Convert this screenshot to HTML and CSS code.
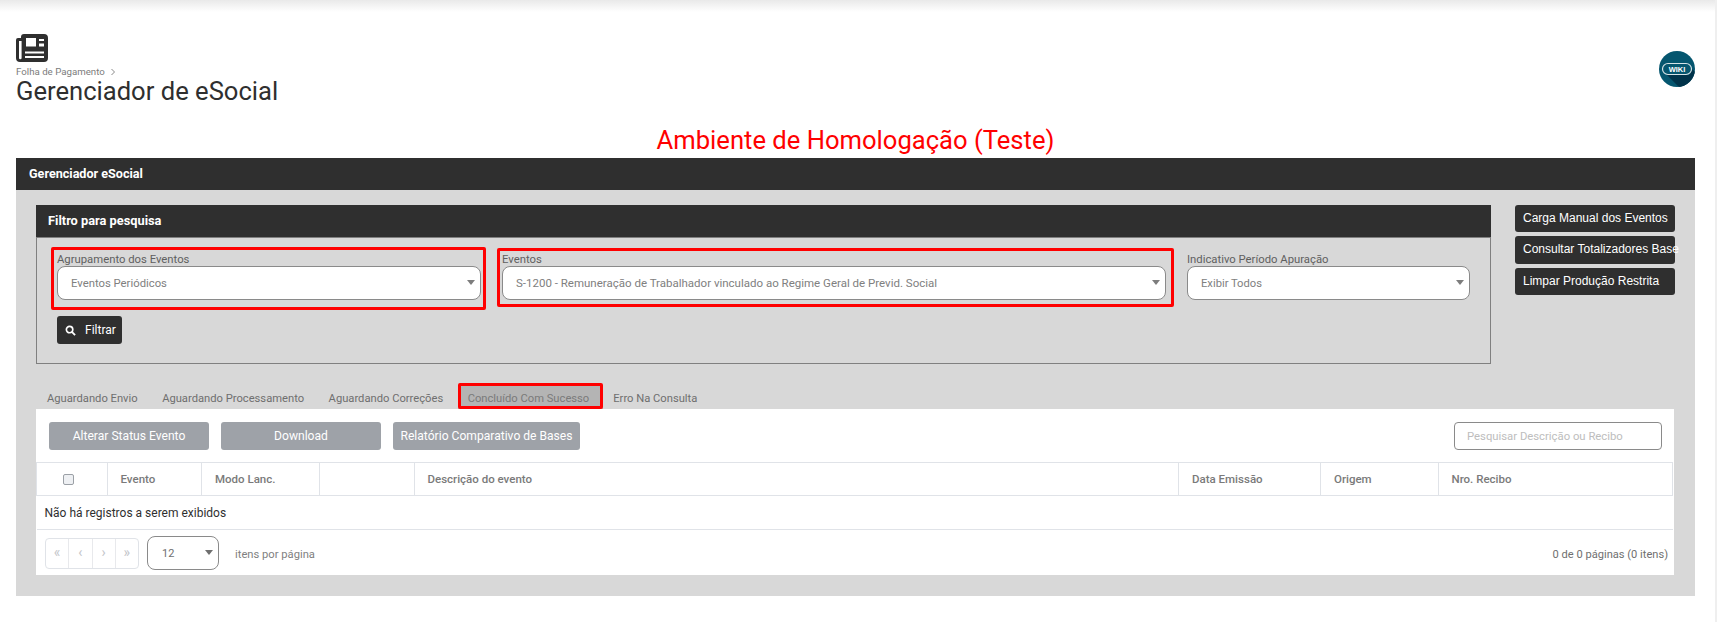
FILE: index.html
```html
<!DOCTYPE html>
<html lang="pt-BR">
<head>
<meta charset="utf-8">
<title>Gerenciador de eSocial</title>
<link rel="stylesheet" href="styles.css">
</head>
<body>
<div class="topbar"></div>
<main class="page">
  <header class="page-head">
    <div class="head-left">
      <svg class="news-icon" viewBox="0 0 32 28" aria-hidden="true">
        <path fill="#2f2f2f" fill-rule="evenodd" d="M8 0H28a4 4 0 0 1 4 4V24a4 4 0 0 1-4 4H4a4 4 0 0 1-4-4V6a2 2 0 0 1 2-2H5V3a3 3 0 0 1 3-3ZM3 7V24a1.300 1.300 0 0 0 2.600 0V7ZM10 4V12.500H20V4ZM23 5V7H28V5ZM23 9.500V12.500H28V9.500ZM9 17.500V19.500H28V17.500ZM9 22V24H28V22Z"/>
      </svg>
      <nav class="crumb">Folha de Pagamento
        <svg class="crumb-sep" viewBox="0 0 6 8" aria-hidden="true"><path d="M1.500 1L4.500 4L1.500 7" fill="none" stroke="#8a8a8a" stroke-width="1"/></svg>
      </nav>
      <h1>Gerenciador de eSocial</h1>
    </div>
    <svg class="wiki" viewBox="0 0 36 36" role="img" aria-label="Wiki">
      <defs><clipPath id="c"><circle cx="18" cy="18" r="18"/></clipPath></defs>
      <circle cx="18" cy="18" r="18" fill="#05566f"/>
      <path clip-path="url(#c)" fill="#00334a" d="M8 24L30 24L33 18L42 26L42 42L26 42Z"/>
      <rect x="3.500" y="12.500" width="29" height="11" rx="5.500" fill="#05566f" stroke="#d5e2e6" stroke-width="1.200"/>
      <text x="18" y="20.800" text-anchor="middle" class="wiki-text">WIKI</text>
    </svg>
  </header>
  <p class="env">Ambiente de Homologação (Teste)</p>

  <section class="card">
    <h2 class="card-title">Gerenciador eSocial</h2>
    <div class="card-body">
      <div class="top-row">
        <section class="filter">
          <h3 class="filter-title">Filtro para pesquisa</h3>
          <div class="filter-body">
            <div class="fields">
              <div class="field field-a">
                <label>Agrupamento dos Eventos</label>
                <div class="select-wrap"><select><option>Eventos Periódicos</option></select></div>
              </div>
              <div class="field field-b">
                <label>Eventos</label>
                <div class="select-wrap"><select><option>S-1200 - Remuneração de Trabalhador vinculado ao Regime Geral de Previd. Social</option></select></div>
              </div>
              <div class="field field-c">
                <label>Indicativo Período Apuração</label>
                <div class="select-wrap"><select><option>Exibir Todos</option></select></div>
              </div>
            </div>
            <button class="btn-dark btn-filter">
              <svg viewBox="0 0 12 12" aria-hidden="true"><circle cx="5" cy="5" r="3.500" fill="none" stroke="#fff" stroke-width="1.800"/><path d="M7.500 7.500L11 11" stroke="#fff" stroke-width="2"/></svg>
              Filtrar
            </button>
          </div>
        </section>
        <div class="side-actions">
          <button class="btn-dark btn-side">Carga Manual dos Eventos</button>
          <button class="btn-dark btn-side btn-tall">Consultar Totalizadores Base</button>
          <button class="btn-dark btn-side">Limpar Produção Restrita</button>
        </div>
      </div>

      <ul class="tabs">
        <li>Aguardando Envio</li>
        <li>Aguardando Processamento</li>
        <li>Aguardando Correções</li>
        <li class="tab-active">Concluído Com Sucesso</li>
        <li>Erro Na Consulta</li>
      </ul>

      <section class="grid-panel">
        <div class="toolbar">
          <button class="btn-gray">Alterar Status Evento</button>
          <button class="btn-gray">Download</button>
          <button class="btn-gray btn-wide">Relatório Comparativo de Bases</button>
          <input class="search" placeholder="Pesquisar Descrição ou Recibo">
        </div>
        <table>
          <colgroup>
            <col class="c1"><col class="c2"><col class="c3"><col class="c4"><col class="c5"><col class="c6"><col class="c7"><col class="c8">
          </colgroup>
          <thead>
            <tr>
              <th class="check"><span class="checkbox"></span></th>
              <th>Evento</th><th>Modo Lanc.</th><th></th><th>Descrição do evento</th><th>Data Emissão</th><th>Origem</th><th>Nro. Recibo</th>
            </tr>
          </thead>
          <tbody>
            <tr><td colspan="8">Não há registros a serem exibidos</td></tr>
          </tbody>
        </table>
        <div class="pager">
          <div class="pages">
            <span>«</span><span>‹</span><span>›</span><span>»</span>
          </div>
          <div class="select-wrap size-select"><select><option>12</option></select></div>
          <span class="per-page">itens por página</span>
          <span class="page-info">0 de 0 páginas (0 itens)</span>
        </div>
      </section>
    </div>
  </section>
</main>
</body>
</html>
```
FILE: styles.css
```css
* { box-sizing: border-box; }
html, body { margin: 0; padding: 0; }
body {
  height: 622px;
  overflow: hidden;
  background: #fff;
  font-family: Roboto, "Liberation Sans", sans-serif;
  color: #2f2f2f;
  border-right: 2px solid #efefef;
}
.topbar {
  height: 12px;
  background: linear-gradient(#e9e9e9, #fff);
}
.page { padding: 0 20px 0 16px; }
.page-head {
  display: flex;
  justify-content: space-between;
  align-items: flex-start;
  padding-top: 22px;
}
.news-icon { display: block; width: 32px; height: 28px; }
.crumb {
  display: flex;
  align-items: center;
  gap: 5px;
  margin-top: 3px;
  font-size: 9.700px;
  line-height: 13px;
  color: #7c7c7c;
}
.crumb-sep { width: 6px; height: 8px; }
h1 {
  margin: -1px 0 0;
  font-size: 25.600px;
  font-weight: 400;
  line-height: 28px;
  color: #2f2f2f;
}
.wiki { width: 36px; height: 36px; margin-top: 17px; }
.wiki-text { font: 700 7.500px "Liberation Sans", sans-serif; fill: #fff; }
.env {
  margin: 19px 0 0;
  text-align: center;
  font-size: 25.600px;
  line-height: 32px;
  color: #f00;
}
.card { margin-top: 2px; }
.card-title {
  margin: 0;
  height: 32px;
  padding-left: 13px;
  background: #2f2f2f;
  color: #fff;
  font-size: 12.600px;
  font-weight: 700;
  line-height: 32px;
}
.card-body {
  height: 406px;
  background: #d8d8d8;
  padding: 15px 20px 0 20px;
}
.top-row { display: flex; justify-content: space-between; align-items: flex-start; }
.filter { width: 1455px; }
.filter-title {
  margin: 0;
  height: 32px;
  padding-left: 12px;
  background: #2f2f2f;
  color: #fff;
  font-size: 12.800px;
  font-weight: 700;
  line-height: 32px;
}
.filter-body {
  height: 127px;
  border: 1px solid #808080;
  padding: 9px 0 0 20px;
}
.fields { display: flex; align-items: flex-start; }
.field label {
  display: block;
  font-size: 11.300px;
  line-height: 13px;
  color: #5f5f5f;
}
.field-a {
  width: 435px;
  height: 63px;
  margin-left: -6px;
  padding: 3px 2px 0 3px;
  border: 3px solid #f00;
  border-radius: 2px;
}
.field-b {
  width: 677px;
  height: 59px;
  margin: 1px 0 0 11px;
  padding: 2px 5px 0 2px;
  border: 3px solid #f00;
  border-radius: 2px;
}
.field-c { width: 283px; margin: 6px 0 0 13px; }
.select-wrap { position: relative; }
.select-wrap::after {
  content: "";
  position: absolute;
  top: 14px;
  right: 6px;
  border: 4.500px solid transparent;
  border-top: 5px solid #7d7d7d;
  border-bottom: 0;
}
select {
  display: block;
  width: 100%;
  height: 34px;
  padding: 0 24px 0 13px;
  appearance: none;
  background: #fff;
  border: 1px solid #8a8a8a;
  border-radius: 8px;
  font: 400 11.300px Roboto, sans-serif;
  color: #808080;
}
.field-b select { font-size: 11.500px; }
.field-c select { font-size: 11.200px; }
.btn-dark {
  background: #2f2f2f;
  color: #fff;
  border: 0;
  border-radius: 3px;
  font-family: "Liberation Sans", Arial, sans-serif;
}
.btn-filter {
  display: flex;
  align-items: center;
  gap: 9px;
  width: 65px;
  height: 28px;
  margin-top: 6px;
  padding: 0 0 0 8px;
  font-family: Roboto, sans-serif;
  font-size: 12px;
}
.btn-filter svg { width: 11px; height: 11px; }
.side-actions { display: flex; flex-direction: column; gap: 4px; width: 160px; }
.btn-side {
  height: 27px;
  padding: 0 0 2px 8px;
  text-align: left;
  font-size: 12px;
  white-space: nowrap;
}
.btn-tall { height: 28px; }
.tabs {
  display: flex;
  list-style: none;
  margin: 21px 0 0;
  padding: 0 0 0 1px;
  height: 24px;
}
.tabs li {
  padding: 0 10px;
  margin-right: 4.500px;
  font-size: 11.200px;
  line-height: 28px;
  color: #6f6f6f;
}
.tabs .tab-active {
  position: relative;
  margin-right: 0;
  padding-right: 14px;
  background: #b4b4b4;
  color: #7a7a7a;
}
.tabs .tab-active::after {
  content: "";
  position: absolute;
  inset: -2px 0 0;
  border: 3px solid #f00;
  border-radius: 2px;
}
.grid-panel { width: 1638px; height: 166px; background: #fff; }
.toolbar {
  display: flex;
  align-items: flex-start;
  gap: 12px;
  height: 53px;
  padding: 13px 12px 0 13px;
}
.btn-gray {
  width: 160px;
  height: 28px;
  padding: 0;
  background: #9ea2a8;
  color: #fff;
  border: 0;
  border-radius: 3px;
  font: 400 12.100px Roboto, sans-serif;
}
.btn-wide { width: 187px; }
.search {
  width: 208px;
  height: 28px;
  margin-left: auto;
  padding: 0 12px;
  border: 1px solid #8a8a8a;
  border-radius: 4px;
  font: 400 11.300px Roboto, sans-serif;
}
.search::placeholder { color: #bdbdbd; }
table {
  width: 1637px;
  border-collapse: collapse;
  table-layout: fixed;
  font-size: 12px;
}
.c1 { width: 70.500px; }
.c2 { width: 94.500px; }
.c3 { width: 118px; }
.c4 { width: 94.500px; }
.c5 { width: 764.500px; }
.c6 { width: 142px; }
.c7 { width: 117.500px; }
th {
  height: 33px;
  padding: 0 13px;
  border: 1px solid #e0e3e8;
  text-align: left;
  font-size: 11.500px;
  font-weight: 500;
  color: #7a7a7a;
}
th.check { padding: 0 0 0 26px; }
.checkbox {
  display: block;
  width: 11px;
  height: 11px;
  background: #eef0f3;
  border: 1px solid #9ba0a6;
  border-radius: 2px;
}
td {
  height: 34px;
  padding: 0 8px;
  border-bottom: 1px solid #e0e3e8;
  color: #2f2f2f;
  font-size: 12px;
}
.pager { display: flex; align-items: center; height: 46px; padding: 0 6px 0 9px; }
.pages {
  display: flex;
  width: 94px;
  height: 31px;
  border: 1px solid #e0e3e8;
  border-radius: 4px;
}
.pages span {
  flex: 1;
  text-align: center;
  line-height: 27px;
  font-size: 14px;
  color: #c4c6ca;
  border-left: 1px solid #e8e9ec;
}
.pages span:first-child { border-left: 0; }
.size-select { width: 72px; margin-left: 8px; }
.size-select select { padding-left: 14px; font-size: 11px; color: #6f6f6f; }
.size-select::after { border-top-color: #6f6f6f; }
.per-page { margin: 2px 0 0 16px; font-size: 11.200px; color: #7f7f7f; }
.page-info { margin: 2px 0 0 auto; font-size: 11.100px; color: #6f6f6f; }
```
